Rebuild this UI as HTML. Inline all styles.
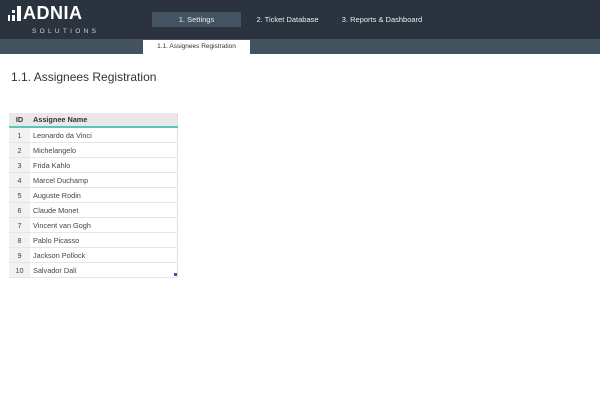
<!DOCTYPE html><html><head><style>
body{margin:0;width:600px;height:406px;background:#fff;font-family:"Liberation Sans",sans-serif;position:relative;overflow:hidden}
.top{position:absolute;left:0;top:0;width:600px;height:39px;background:#2b343e}
.sub{position:absolute;left:0;top:39px;width:600px;height:15px;background:#44525f}
.nav{position:absolute;top:12px;height:15px;line-height:15px;font-size:7.5px;color:#e8ecef;text-align:center}
.tab{position:absolute;left:143px;top:40px;width:107px;height:14px;background:#fff;font-size:6.5px;color:#333;text-align:center;line-height:14px}
h1{position:absolute;left:11px;top:70px;margin:0;font-size:12px;font-weight:normal;color:#333}
table{position:absolute;left:9px;top:113px;border-collapse:collapse;font-size:7.3px;color:#444}
td{height:14px;padding:0;border-bottom:1px solid #e6e6e6}
td.id{width:21px;text-align:center;background:#f2f2f2}
td.n{width:144px;padding-left:3px;border-right:1px solid #e0e0e0}
tr.h td{background:#e8e8e8;font-weight:bold;color:#333;border-bottom:2px solid #5bc6b5;height:13px}
</style></head><body>
<div class="top"></div><div class="sub"></div>
<div style="position:absolute;left:8px;top:15px;width:2px;height:6px;background:#fff"></div>
<div style="position:absolute;left:12px;top:15px;width:3px;height:6px;background:#fff"></div>
<div style="position:absolute;left:12px;top:10px;width:3px;height:3px;background:#fff"></div>
<div style="position:absolute;left:17px;top:6px;width:4px;height:15px;background:#fff"></div>
<div style="position:absolute;left:23px;top:2px;font-size:18px;font-weight:bold;color:#fff;letter-spacing:0.5px;line-height:22px">ADNIA</div>
<div style="position:absolute;left:32px;top:28px;font-size:6.5px;color:#cfd5da;letter-spacing:3.3px">SOLUTIONS</div>
<div class="nav" style="left:152px;width:89px;background:#445362">1. Settings</div>
<div class="nav" style="left:250px;width:75px">2. Ticket Database</div>
<div class="nav" style="left:338px;width:88px">3. Reports &amp; Dashboard</div>
<div class="tab">1.1. Assignees Registration</div>
<h1>1.1. Assignees Registration</h1>
<table>
<tr class="h"><td class="id">ID</td><td class="n">Assignee Name</td></tr>
<tr><td class="id">1</td><td class="n">Leonardo da Vinci</td></tr>
<tr><td class="id">2</td><td class="n">Michelangelo</td></tr>
<tr><td class="id">3</td><td class="n">Frida Kahlo</td></tr>
<tr><td class="id">4</td><td class="n">Marcel Duchamp</td></tr>
<tr><td class="id">5</td><td class="n">Auguste Rodin</td></tr>
<tr><td class="id">6</td><td class="n">Claude Monet</td></tr>
<tr><td class="id">7</td><td class="n">Vincent van Gogh</td></tr>
<tr><td class="id">8</td><td class="n">Pablo Picasso</td></tr>
<tr><td class="id">9</td><td class="n">Jackson Pollock</td></tr>
<tr><td class="id">10</td><td class="n">Salvador Dalí</td></tr>
</table>
<div style="position:absolute;left:174px;top:273px;width:3px;height:3px;background:#3b5da8"></div>
</body></html>
